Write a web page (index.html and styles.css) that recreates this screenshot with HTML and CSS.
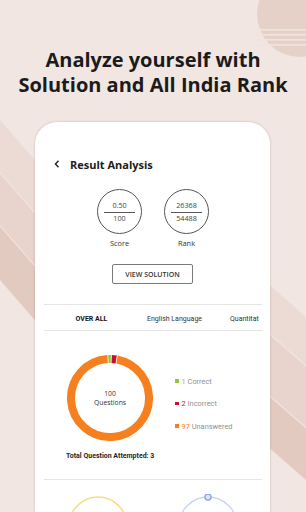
FILE: index.html
```html
<!DOCTYPE html>
<html lang="en">
<head>
<meta charset="utf-8">
<title>Result Analysis</title>
<link rel="stylesheet" href="styles.css">
</head>
<body>
<svg class="backdrop" width="306" height="512" viewBox="0 0 306 512" aria-hidden="true">
  <circle cx="300" cy="14" r="43" fill="#e6d1c8"/>
  <rect x="255" y="29" width="60" height="1.6" fill="#f1e4df"/>
  <rect x="255" y="34" width="60" height="1.6" fill="#f1e4df"/>
  <rect x="255" y="39" width="60" height="1.6" fill="#f1e4df"/>
  <rect x="255" y="44" width="60" height="1.6" fill="#f1e4df"/>
  <polygon points="0,120 40,166 40,218 0,172" fill="#ecdbd4"/>
  <polygon points="0,173.5 40,219.5 40,271 0,225" fill="#e8d4cc"/>
  <polygon points="0,226.5 40,272.5 40,326 0,280" fill="#e3cac0"/>
  <polygon points="266,282 306,317 306,365 266,330" fill="#ecdbd4"/>
  <polygon points="266,331.5 306,366.5 306,427 266,392" fill="#e8d4cc"/>
  <polygon points="266,393.5 306,428.5 306,480 266,445" fill="#e3cac0"/>
</svg>

<h1 class="headline">Analyze yourself with<br>Solution and All India Rank</h1>

<main class="phone">
  <header class="topbar">
    <svg class="back" width="6" height="8" viewBox="0 0 6 8" aria-hidden="true"><path d="M4.5 0.8 L1.5 4 L4.5 7.2" fill="none" stroke="#222" stroke-width="1.4"/></svg>
    <span class="title">Result Analysis</span>
  </header>

  <div class="stats">
    <div class="stat">
      <div class="ring"><span>0.50</span><i></i><span>100</span></div>
      <div class="stat-label">Score</div>
    </div>
    <div class="stat">
      <div class="ring"><span>26368</span><i></i><span>54488</span></div>
      <div class="stat-label">Rank</div>
    </div>
  </div>

  <div class="action"><span class="view-btn">VIEW SOLUTION</span></div>

  <div class="rule"></div>

  <nav class="tabs">
    <div class="tab-strip">
      <span class="tab active">OVER ALL</span>
      <span class="tab">English Language</span>
      <span class="tab tab-cut">Quantitative Aptitude</span>
    </div>
  </nav>

  <section class="chart">
    <div class="donut">
      <svg width="86" height="86" viewBox="0 0 86 86" aria-hidden="true">
        <g transform="rotate(-93.5 43 43)">
          <circle cx="43" cy="43" r="39" fill="none" stroke="#f6801f" stroke-width="8"/>
          <circle cx="43" cy="43" r="39" fill="none" stroke="#ffffff" stroke-width="8.4" stroke-dasharray="9.4 400"/>
          <circle cx="43" cy="43" r="39" fill="none" stroke="#95c43c" stroke-width="8" stroke-dasharray="0 0.8 2.4 400"/>
          <circle cx="43" cy="43" r="39" fill="none" stroke="#c8102e" stroke-width="8" stroke-dasharray="0 4.1 4.5 400"/>
        </g>
      </svg>
      <div class="donut-text"><span>100</span><span>Questions</span></div>
    </div>
    <ul class="legend">
      <li><b class="sq green"></b><em class="n-green">1</em> Correct</li>
      <li><b class="sq red"></b><em class="n-red">2</em> Incorrect</li>
      <li><b class="sq orange"></b><em class="n-orange">97</em> Unanswered</li>
    </ul>
  </section>

  <p class="total">Total Question Attempted: 3</p>

  <div class="rule rule-2"></div>

  <div class="gauges">
    <svg width="64" height="64" viewBox="0 0 64 64" aria-hidden="true">
      <circle cx="32" cy="32" r="29" fill="none" stroke="#f4dc86" stroke-width="1.5"/>
    </svg>
    <svg width="64" height="64" viewBox="0 0 64 64" aria-hidden="true">
      <circle cx="32" cy="32" r="29" fill="none" stroke="#c6d3f3" stroke-width="1.3"/>
      <circle cx="32" cy="3" r="3" fill="#dfe6fa" stroke="#8fa6e6" stroke-width="1.4"/>
    </svg>
  </div>
</main>
</body>
</html>
```

FILE: styles.css
```css
* { box-sizing: border-box; }

html, body {
  margin: 0;
  padding: 0;
}

body {
  width: 306px;
  height: 512px;
  overflow: hidden;
  position: relative;
  background: #f2e6e2;
  font-family: "Open Sans", "Noto Sans", sans-serif;
  color: #222;
}

.backdrop {
  position: absolute;
  left: 0;
  top: 0;
  z-index: 0;
}

.headline {
  position: relative;
  z-index: 1;
  margin: 0;
  padding-top: 48px;
  font-size: 20px;
  line-height: 24.5px;
  font-weight: 700;
  text-align: center;
  color: #1b1b1b;
}

.phone {
  position: relative;
  z-index: 1;
  margin: 25px 0 0 35px;
  width: 235px;
  height: 390px;
  overflow: hidden;
  background: #fff;
  border-radius: 22px 22px 0 0;
  box-shadow: 0 0 3px rgba(0, 0, 0, 0.16), 0 0 1px rgba(0, 0, 0, 0.08);
  padding-top: 34px;
}

.topbar {
  display: flex;
  align-items: center;
  height: 16px;
  padding-left: 19px;
}

.back { display: block; }

.title {
  margin-left: 10px;
  font-size: 11px;
  font-weight: 700;
  color: #1c1c1c;
}

.stats {
  display: flex;
  justify-content: center;
  gap: 22px;
  margin-top: 17px;
  padding-left: 1px;
}

.stat {
  display: flex;
  flex-direction: column;
  align-items: center;
}

.ring {
  width: 45px;
  height: 45px;
  border: 1px solid #555;
  border-radius: 50%;
  display: flex;
  flex-direction: column;
  align-items: center;
  justify-content: center;
  font-size: 7.2px;
  color: #444;
}

.ring span {
  line-height: 9px;
  height: 9px;
}

.ring i {
  display: block;
  width: 31px;
  height: 1px;
  background: #555;
  margin: 2px 0 1px;
}

.stat-label {
  margin-top: 4px;
  font-size: 7.4px;
  line-height: 10px;
  color: #333;
}

.action {
  display: flex;
  justify-content: center;
  margin-top: 16px;
}

.view-btn {
  width: 81px;
  height: 20px;
  border: 1px solid #7a7a7a;
  border-radius: 2px;
  display: flex;
  align-items: center;
  justify-content: center;
  font-size: 7px;
  font-weight: 600;
  color: #333;
}

.rule {
  margin: 20px 8px 0 9px;
  height: 1px;
  background: #e4e4e4;
}

.tabs {
  margin: 0 8px 0 9px;
  border-bottom: 1px solid #e4e4e4;
}

.tab-strip {
  display: flex;
  width: 215px;
  overflow: hidden;
  padding-left: 6px;
}

.tab {
  flex: 0 0 83px;
  height: 25px;
  padding-top: 3px;
  display: flex;
  align-items: center;
  justify-content: center;
  font-family: Roboto, "Liberation Sans", sans-serif;
  font-size: 7px;
  color: #333;
  white-space: nowrap;
  position: relative;
}

.tab.active {
  font-weight: 700;
  color: #111;
}

.tab.active::after {
  content: "";
  position: absolute;
  left: 0;
  right: 0;
  bottom: -1px;
  height: 1.5px;
  background: #333;
}

.tab-cut {
  justify-content: flex-start;
  padding-left: 14px;
  overflow: hidden;
}

.chart {
  display: flex;
  padding-left: 32px;
  margin-top: 24px;
  gap: 22px;
}

.donut {
  display: grid;
  width: 86px;
  height: 86px;
}

.donut svg,
.donut-text {
  grid-area: 1 / 1;
}

.donut svg { display: block; }

.donut-text {
  display: flex;
  flex-direction: column;
  align-items: center;
  justify-content: center;
  font-size: 6.8px;
  line-height: 9px;
  color: #333;
}

.legend {
  list-style: none;
  margin: 0;
  padding: 21px 0 0;
  display: flex;
  flex-direction: column;
  gap: 12.5px;
  font-family: Roboto, "Liberation Sans", sans-serif;
  font-size: 7.4px;
  color: #8f8f8f;
}

.legend li {
  display: flex;
  align-items: center;
  height: 10px;
  white-space: pre;
}

.sq {
  width: 3.6px;
  height: 3.6px;
  margin-right: 3px;
}

.green { background: #95c43c; }
.red { background: #c8102e; }
.orange { background: #f6801f; }

.legend em { font-style: normal; }
.n-green { color: #95c43c; }
.n-red { color: #c8102e; }
.n-orange { color: #f6801f; }

.total {
  margin: 10px 0 0;
  padding-left: 31px;
  font-family: Roboto, "Liberation Sans", sans-serif;
  font-size: 7px;
  line-height: 10px;
  font-weight: 700;
  color: #1f1f1f;
}

.rule-2 {
  margin-top: 18px;
}

.gauges {
  display: flex;
  margin-top: 14px;
  padding-left: 31px;
  gap: 46px;
}

.gauges svg { display: block; }
```
